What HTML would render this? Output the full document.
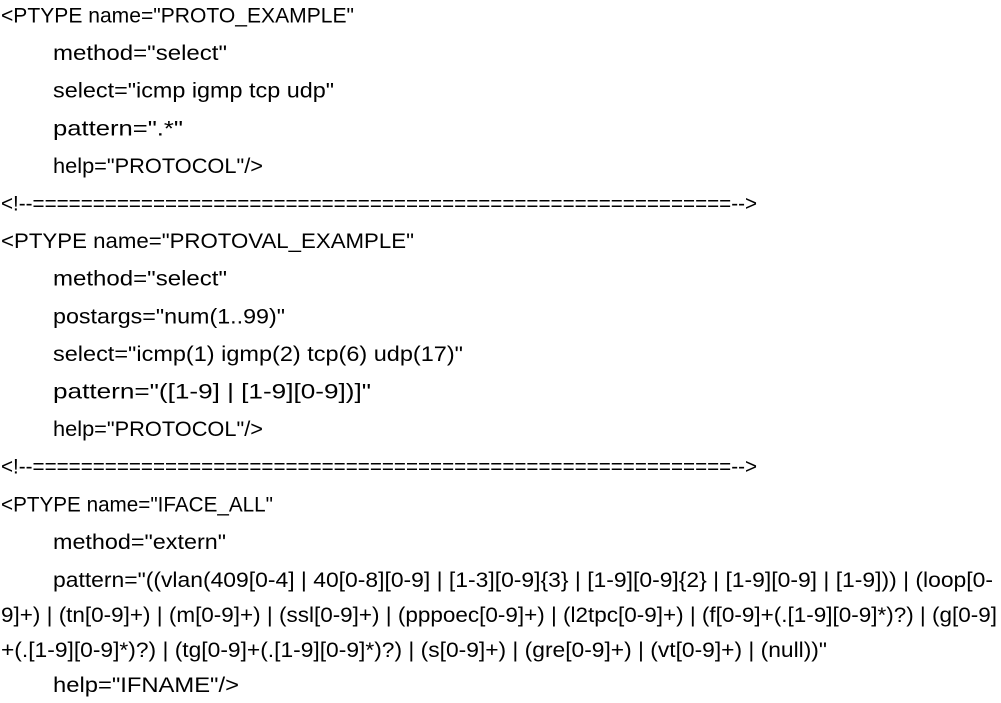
<!DOCTYPE html>
<html><head><meta charset="utf-8"><style>
html,body{margin:0;padding:0;background:#fff;width:1001px;height:703px;overflow:hidden}
svg text{font-family:"Liberation Sans",sans-serif;font-size:21.5px;fill:#000}
</style></head><body>
<svg width="1001" height="703" xmlns="http://www.w3.org/2000/svg">
<text x="1" y="22.5" textLength="353" lengthAdjust="spacingAndGlyphs">&lt;PTYPE name="PROTO_EXAMPLE"</text>
<text x="53" y="60.1" textLength="174" lengthAdjust="spacingAndGlyphs">method="select"</text>
<text x="53" y="97.7" textLength="281" lengthAdjust="spacingAndGlyphs">select="icmp igmp tcp udp"</text>
<text x="53" y="135.3" textLength="130" lengthAdjust="spacingAndGlyphs">pattern=".*"</text>
<text x="53" y="172.9" textLength="210" lengthAdjust="spacingAndGlyphs">help="PROTOCOL"/&gt;</text>
<text x="1" y="210.5" textLength="756" lengthAdjust="spacingAndGlyphs">&lt;!--==========================================================--&gt;</text>
<text x="1" y="248.1" textLength="413" lengthAdjust="spacingAndGlyphs">&lt;PTYPE name="PROTOVAL_EXAMPLE"</text>
<text x="53" y="285.7" textLength="174" lengthAdjust="spacingAndGlyphs">method="select"</text>
<text x="53" y="323.3" textLength="232" lengthAdjust="spacingAndGlyphs">postargs="num(1..99)"</text>
<text x="53" y="360.9" textLength="410" lengthAdjust="spacingAndGlyphs">select="icmp(1) igmp(2) tcp(6) udp(17)"</text>
<text x="53" y="398.5" textLength="318" lengthAdjust="spacingAndGlyphs">pattern="([1-9] | [1-9][0-9])]"</text>
<text x="53" y="436.1" textLength="210" lengthAdjust="spacingAndGlyphs">help="PROTOCOL"/&gt;</text>
<text x="1" y="473.7" textLength="756" lengthAdjust="spacingAndGlyphs">&lt;!--==========================================================--&gt;</text>
<text x="1" y="511.3" textLength="272" lengthAdjust="spacingAndGlyphs">&lt;PTYPE name="IFACE_ALL"</text>
<text x="53" y="548.9" textLength="173" lengthAdjust="spacingAndGlyphs">method="extern"</text>
<text x="53" y="587" textLength="940" lengthAdjust="spacingAndGlyphs">pattern="((vlan(409[0-4] | 40[0-8][0-9] | [1-3][0-9]{3} | [1-9][0-9]{2} | [1-9][0-9] | [1-9])) | (loop[0-</text>
<text x="1" y="622" textLength="996" lengthAdjust="spacingAndGlyphs">9]+) | (tn[0-9]+) | (m[0-9]+) | (ssl[0-9]+) | (pppoec[0-9]+) | (l2tpc[0-9]+) | (f[0-9]+(.[1-9][0-9]*)?) | (g[0-9]</text>
<text x="1" y="657" textLength="826" lengthAdjust="spacingAndGlyphs">+(.[1-9][0-9]*)?) | (tg[0-9]+(.[1-9][0-9]*)?) | (s[0-9]+) | (gre[0-9]+) | (vt[0-9]+) | (null))"</text>
<text x="53" y="692" textLength="186" lengthAdjust="spacingAndGlyphs">help="IFNAME"/&gt;</text>
</svg>
</body></html>
